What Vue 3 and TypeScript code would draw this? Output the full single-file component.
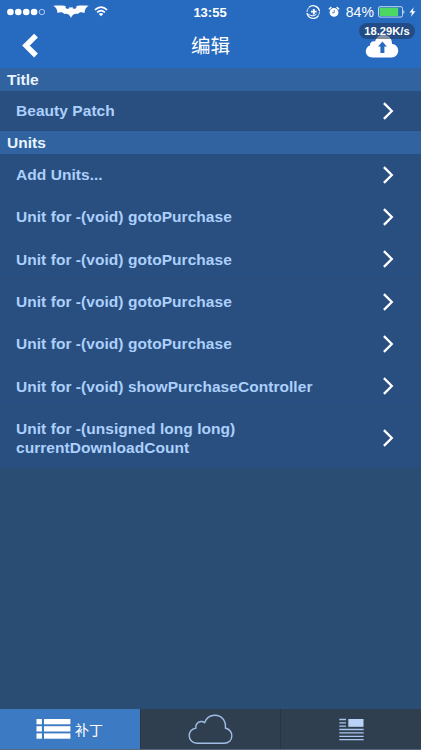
<script setup lang="ts">
import { ref } from 'vue'

interface Row {
  label: string
  tall?: boolean
}

interface Section {
  title: string
  rows: Row[]
}

const sections: Section[] = [
  { title: 'Title', rows: [{ label: 'Beauty Patch' }] },
  {
    title: 'Units',
    rows: [
      { label: 'Add Units...' },
      { label: 'Unit for -(void) gotoPurchase' },
      { label: 'Unit for -(void) gotoPurchase' },
      { label: 'Unit for -(void) gotoPurchase' },
      { label: 'Unit for -(void) gotoPurchase' },
      { label: 'Unit for -(void) showPurchaseController' },
      { label: 'Unit for -(unsigned long long) currentDownloadCount', tall: true }
    ]
  }
]

const activeTab = ref('patch')
</script>

<template>
  <div class="screen">
    <header class="top">
      <div class="status">
        <div class="status-left">
          <svg class="signal" width="38" height="8" viewBox="0 0 38 8">
            <circle v-for="i in 4" :key="i" :cx="3.4 + (i - 1) * 7.9" cy="4" r="3.3" fill="#fff" />
            <circle cx="34.9" cy="4" r="2.7" fill="none" stroke="#cfe2ff" stroke-width="0.8" />
          </svg>
          <svg class="bat" width="36" height="14" viewBox="0 0 36 14">
            <path
              d="M0.3 0.8C5 0.3 9 0.5 12.6 0.9C11.9 3.2 14 4.1 16.2 3.6L16.7 1.8L17.5 2.6H18.5L19.3 1.8L19.8 3.6C22 4.1 24.1 3.2 23.4 0.9C27 0.5 31 0.3 35.7 0.8C33.1 2.3 31.7 4.5 31.5 7.9C28.2 6.9 26.2 7.3 24.8 9C21.8 8.2 19.5 9.4 18 12.9C16.5 9.4 14.2 8.2 11.2 9C9.8 7.3 7.8 6.9 4.5 7.9C4.3 4.5 2.9 2.3 0.3 0.8Z"
              fill="#fff"
            />
          </svg>
          <svg class="wifi" width="14" height="11" viewBox="0 0 14 11">
            <path d="M0.9 3.9Q7 -1.6 13.1 3.9M3.1 6.3Q7 2.8 10.9 6.3" fill="none" stroke="#fff" stroke-width="1.6" />
            <path d="M4.8 8Q7 6.1 9.2 8L7 10.3Z" fill="#fff" />
          </svg>
        </div>
        <span class="time">13:55</span>
        <div class="status-right">
          <svg width="15" height="14" viewBox="0 0 15 14">
            <path d="M3 2.3A6.3 6.3 0 0 1 13.4 6M1 8A6.3 6.3 0 0 0 12.3 10.8" fill="none" stroke="#fff" stroke-width="1.3" />
            <path d="M1 7.2A6.3 6.3 0 0 1 2.8 2.6M13.5 6.5A6.3 6.3 0 0 1 12.2 10.7" fill="none" stroke="#fff" stroke-width="0.8" />
            <path d="M7.8 3.9V9.5M5 6.7H10.6" stroke="#fff" stroke-width="1.8" />
            <path d="M2.2 9.3Q7.5 12.5 10.5 9" fill="none" stroke="#fff" stroke-width="1" />
          </svg>
          <svg class="alarm" width="12" height="12" viewBox="0 0 12 12">
            <circle cx="6" cy="6.4" r="4.4" fill="#fff" />
            <path d="M0.9 3.2L3.4 1M8.6 1L11.1 3.2" stroke="#fff" stroke-width="1.5" />
            <path d="M6.2 3.9V6.7H4.1" fill="none" stroke="#276bc0" stroke-width="0.8" />
          </svg>
          <span class="percent">84%</span>
          <svg class="battery" width="27" height="12" viewBox="0 0 27 12">
            <rect x="0.5" y="0.7" width="24" height="10.4" rx="1.5" fill="none" stroke="#e4f2ff" stroke-width="0.8" />
            <rect x="1.6" y="1.8" width="18.5" height="8.2" rx="0.4" fill="#4bd964" />
            <path d="M25.5 4Q27.3 5.9 25.5 7.8Z" fill="#fff" />
          </svg>
          <svg class="bolt" width="7" height="10" viewBox="0 0 7 10">
            <path d="M4.7 0.3L0.5 5.5H3L1.9 9.7L6.5 4.2H3.8Z" fill="#fff" />
          </svg>
        </div>
      </div>
      <nav class="navbar">
        <button class="nav-button" aria-label="Back">
          <svg width="17" height="26" viewBox="0 0 17 26">
            <path d="M14 2.7L4 12.6L14 22.5" fill="none" stroke="#fff" stroke-width="5.4" />
          </svg>
        </button>
        <h1>编辑</h1>
        <button class="nav-button upload" aria-label="Upload">
          <svg width="34" height="24" viewBox="0 0 34 24">
            <path
              d="M7.5 23.5C3.5 23.5 0.8 20.8 0.8 17.3C0.8 14.5 2.5 12.2 5 11.4C4.7 8.3 7.3 6.6 10.1 7.4C11.3 3.2 14.4 0.8 18.3 0.8C23.6 0.8 27.3 4.8 27 10C30.7 10.2 33.2 13 33.2 16.6C33.2 20.7 30.5 23.5 26.5 23.5Z"
              fill="#fff"
            />
            <path d="M17.4 7.4L21.8 12.6H19.4V18.9H15.4V12.6H13Z" fill="#276bc0" />
          </svg>
        </button>
      </nav>
      <span class="speed">18.29K/s</span>
    </header>

    <main>
      <section v-for="section in sections" :key="section.title">
        <h2>{{ section.title }}</h2>
        <ul>
          <li v-for="(row, i) in section.rows" :key="i" :class="{ tall: row.tall }">
            <span class="label">{{ row.label }}</span>
            <svg class="chevron" width="12" height="20" viewBox="0 0 12 20">
              <path d="M1.9 2.1L9.8 10L1.9 17.9" fill="none" stroke="#fff" stroke-width="2.3" />
            </svg>
          </li>
        </ul>
      </section>
    </main>

    <footer class="tabs">
      <button :class="{ active: activeTab === 'patch' }" @click="activeTab = 'patch'">
        <svg width="35" height="22" viewBox="0 0 35 22">
          <g fill="#fff">
            <template v-for="y in [1, 8.2, 15.4]" :key="y">
              <rect x="0.5" :y="y" width="5.4" height="5.3" />
              <rect x="8" :y="y" width="26.4" height="5.3" />
            </template>
          </g>
        </svg>
        <span>补丁</span>
      </button>
      <button :class="{ active: activeTab === 'cloud' }" aria-label="Cloud" @click="activeTab = 'cloud'">
        <svg width="45" height="31" viewBox="0 0 45 31">
          <path
            d="M9 29.2C4.5 29.2 1.2 26 1.2 21.8C1.2 17.8 4 14.9 7.9 14.1C7.2 9.2 12.3 5.8 16.7 8.6C18.4 3.8 22 1.2 26.8 1.2C33.3 1.2 38.2 6.3 37.4 14C41.2 15.2 43.8 18.2 43.8 22C43.8 26.3 40.6 29.2 36.2 29.2Z"
            fill="none"
            stroke="#a2bde4"
            stroke-width="1.4"
          />
        </svg>
      </button>
      <button :class="{ active: activeTab === 'news' }" aria-label="News" @click="activeTab = 'news'">
        <svg width="25" height="24" viewBox="0 0 25 24">
          <path
            d="M0.3 2.5H7M0.3 5.8H7M0.3 9.2H7M0.3 12.5H24.7M0.3 15.9H24.7M0.3 19.3H24.7M0.3 22.7H24.7"
            stroke="#a9c5ee"
            stroke-width="1.3"
          />
          <rect x="9.3" y="2" width="15.2" height="7.8" fill="#b9d2f8" />
        </svg>
      </button>
    </footer>
  </div>
</template>

<style>
body {
  margin: 0;
  background: #2a4d74;
}
</style>

<style scoped>
.screen {
  display: flex;
  flex-direction: column;
  box-sizing: border-box;
  height: 750px;
  overflow: hidden;
  border-bottom: 1px solid #55687c;
  background: #2a4d74;
  font-family: "Liberation Sans", "Noto Sans CJK SC", sans-serif;
}

button {
  padding: 0;
  border: 0;
  background: none;
  font: inherit;
  color: inherit;
}

svg {
  display: block;
  flex-shrink: 0;
}

.top {
  position: relative;
  height: 68px;
  flex-shrink: 0;
  background: #276bc0;
  color: #fff;
}

.status {
  display: grid;
  grid-template-columns: 1fr auto 1fr;
  align-items: center;
  height: 23px;
  padding: 0 5px 0 7px;
}

.status-left,
.status-right {
  display: flex;
  align-items: center;
}

.status-right {
  justify-content: flex-end;
}

.bat {
  margin-left: 8px;
}

.wifi {
  margin-left: 5px;
}

.time {
  padding: 1px 3px 0 0;
  font-size: 13px;
  font-weight: bold;
}

.alarm {
  margin-left: 7px;
}

.percent {
  margin-left: 6px;
  font-size: 14px;
  letter-spacing: 0.1px;
}

.battery {
  margin-left: 4px;
}

.bolt {
  margin-left: 4px;
}

.navbar {
  display: flex;
  align-items: center;
  justify-content: space-between;
  height: 45px;
  padding: 0 22px;
}

.navbar h1 {
  margin: 0;
  padding: 2px 0 0 17px;
  font-size: 19.5px;
  font-weight: normal;
  line-height: 43px;
}

/* network speed bubble floats over the bars */
.speed {
  position: absolute;
  top: 23px;
  right: 6px;
  width: 56px;
  height: 16px;
  border-radius: 8px;
  background: rgba(32, 51, 85, 0.55);
  font-size: 11.2px;
  font-weight: bold;
  line-height: 16px;
  text-align: center;
}

main {
  flex: 1;
}

h2 {
  box-sizing: border-box;
  height: 22.5px;
  margin: 0;
  padding-left: 7px;
  background: #3163a0;
  color: #e8f4ff;
  font-size: 15.5px;
  line-height: 23px;
}

ul {
  margin: 0;
  padding: 0;
  list-style: none;
}

li {
  display: flex;
  align-items: center;
  justify-content: space-between;
  box-sizing: border-box;
  height: 42.3px;
  padding: 1px 27px 0 16px;
  border-bottom: 1px solid #2a4c77;
  background: #294f80;
}

section:first-child li {
  height: 40.5px;
}

li.tall {
  height: 61px;
}

.label {
  max-width: 300px;
  color: #acd0fb;
  font-size: 15.5px;
  font-weight: bold;
  line-height: 19px;
  letter-spacing: 0.05px;
}

.tall .label {
  padding-top: 1px;
}

.tabs {
  display: grid;
  grid-template-columns: 140px 140px 1fr;
  height: 40px;
  flex-shrink: 0;
  background: #2f3f50;
}

.tabs button {
  display: flex;
  align-items: center;
  justify-content: center;
  gap: 4px;
  color: #fff;
  font-size: 14px;
}

.tabs button:first-child {
  padding-right: 1px;
}

.tabs button + button {
  border-left: 1px solid #263648;
}

.tabs button.active {
  background: #3d7ac4;
}
</style>
